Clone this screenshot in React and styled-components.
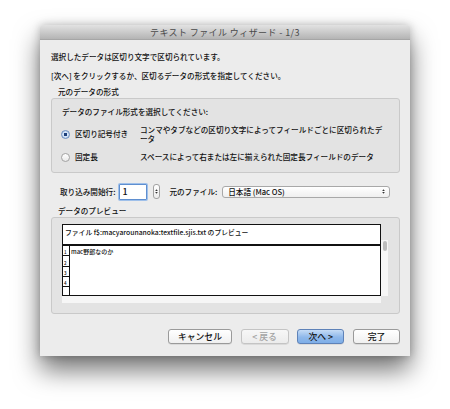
import React from 'react';
import styled, {createGlobalStyle} from 'styled-components';

const GlobalStyle = createGlobalStyle`
  html, body {
    margin: 0;
    padding: 0;
    background: #fff;
  }
  body {
    font-family: "Noto Sans CJK JP", "Noto Sans", sans-serif;
    font-weight: 500;
    color: #111;
  }
`;

const Page = styled.div`
  width: 450px;
  height: 409px;
  padding: 25px 0 0 40px;
  box-sizing: border-box;
  overflow: hidden;
`;

const Window = styled.div`
  width: 370px;
  background: #ececec;
  box-shadow: 0 14px 26px rgba(0, 0, 0, 0.55), 0 0 9px rgba(0, 0, 0, 0.22);
  border-radius: 3px 3px 0 0;
`;

const TitleBar = styled.div`
  height: 15px;
  display: flex;
  align-items: center;
  justify-content: center;
  background: linear-gradient(#e2e2e2, #b4b4b4);
  border-bottom: 1px solid #a6a6a6;
  border-radius: 3px 3px 0 0;
  box-sizing: border-box;
  font-size: 9px;
  font-weight: 400;
  letter-spacing: 0.4px;
  color: #4a4a4a;
`;

const Content = styled.div`
  padding: 12px 10px 12px 11px;
  display: flex;
  flex-direction: column;
`;

const Line = styled.div`
  font-size: 7.6px;
  line-height: 10px;
  height: 10px;
  white-space: nowrap;
  margin-top: ${p => p.top || 0}px;
  padding-left: ${p => p.indent || 0}px;
`;

const Group = styled.div`
  margin-top: 1px;
  background: #e3e3e3;
  border: 1px solid #c9c9c9;
  border-radius: 3px;
  padding: ${p => p.pad};
`;

const RadioRow = styled.div`
  display: grid;
  grid-template-columns: 78px 1fr;
  align-items: center;
  margin-top: ${p => p.top}px;
  font-size: 7.6px;
  line-height: 8.7px;
`;

const RadioLabel = styled.div`
  display: flex;
  align-items: center;
  gap: 5px;
  margin-left: -1px;
`;

const RadioCircle = styled.span`
  width: 9px;
  height: 9px;
  border-radius: 50%;
  box-sizing: border-box;
  border: 1px solid ${p => p.checked ? '#6d8fbf' : '#a3a3a3'};
  background: ${p => p.checked
    ? 'radial-gradient(circle, #1c3f7a 0 1.6px, #d7e6f8 2px, #a9c6ea 100%)'
    : 'linear-gradient(#ffffff, #e9e9e9)'};
`;

const Desc = styled.div`
  white-space: nowrap;
`;

const ControlRow = styled.div`
  margin-top: 11px;
  height: 16px;
  display: flex;
  align-items: center;
  padding-left: 9px;
  font-size: 7.6px;
  white-space: nowrap;
`;

const NumberInput = styled.div`
  margin-left: 4px;
  width: 28px;
  height: 15.5px;
  box-sizing: border-box;
  background: #fff;
  border: 1px solid #5f8fd0;
  box-shadow: 0 0 0 1px #9fc0ea;
  border-radius: 1px;
  font-size: 9px;
  line-height: 13px;
  padding-left: 2px;
`;

const Stepper = styled.div`
  margin-left: 6px;
  width: 7px;
  height: 15px;
  box-sizing: border-box;
  border: 1px solid #a2a2a2;
  border-radius: 3px;
  background: linear-gradient(#ffffff, #ececec);
  display: flex;
  align-items: center;
  justify-content: center;
`;

const Label = styled.span`
  margin-left: ${p => p.left || 0}px;
`;

const Select = styled.div`
  margin-left: 5px;
  width: 168px;
  height: 12.5px;
  box-sizing: border-box;
  border: 1px solid #a8a8a8;
  border-radius: 3px;
  background: linear-gradient(#ffffff, #efefef);
  display: flex;
  align-items: center;
  justify-content: space-between;
  padding: 0 4px 0 5px;
  font-size: 7.6px;
`;

const Preview = styled.div`
  display: grid;
  grid-template-columns: 319px 7px;
  grid-template-rows: 20.7px 51.3px 7px;
`;

const PreviewHeader = styled.div`
  background: #fff;
  border: 1px solid #111;
  box-sizing: border-box;
  font-size: 6.8px;
  line-height: 10px;
  padding: 2px 2px 0;
  white-space: nowrap;
`;

const Lines = styled.div`
  grid-column: 1;
  grid-row: 2;
  background: #fff;
  border: 1px solid #111;
  box-sizing: border-box;
  display: grid;
  grid-template-columns: 7px 1fr;
  overflow: hidden;
`;

const Gutter = styled.div`
  display: flex;
  flex-direction: column;
`;

const RowNum = styled.div`
  height: 10.3px;
  flex: none;
  box-sizing: border-box;
  border-right: 1px solid #111;
  border-bottom: 1px solid #111;
  font-size: 4.5px;
  line-height: 5px;
  display: flex;
  align-items: flex-end;
  padding-left: 1px;
`;

const LineText = styled.div`
  font-size: 6px;
  line-height: 8px;
  padding: 2px 0 0 1px;
  white-space: nowrap;
`;

const VTrack = styled.div`
  grid-column: 2;
  grid-row: 1 / 3;
  align-self: end;
  height: 56px;
  background: #f6f6f6;
  display: flex;
  justify-content: center;
`;

const Thumb = styled.div`
  margin-top: 1px;
  width: 4px;
  height: 10px;
  border-radius: 2px;
  background: #bdbdbd;
`;

const HTrack = styled.div`
  grid-column: 1;
  grid-row: 3;
  background: #f6f6f6;
`;

const Buttons = styled.div`
  margin-top: 15px;
  display: flex;
  justify-content: flex-end;
  gap: 8.7px;
`;

const Button = styled.div`
  width: ${p => p.w}px;
  height: 14.3px;
  box-sizing: border-box;
  border-radius: 3px;
  display: flex;
  align-items: center;
  justify-content: center;
  font-size: 8.8px;
  border: 1px solid ${p => p.primary ? '#5e82b8' : p.disabled ? '#c4c4c4' : '#9a9a9a'};
  color: ${p => p.disabled ? '#a3a3a3' : '#111'};
  background: ${p => p.primary
    ? 'linear-gradient(#c6dcf6, #8fb8ea 55%, #7eaee8)'
    : p.disabled ? 'linear-gradient(#f7f7f7, #ececec)' : 'linear-gradient(#ffffff, #f0f0f0)'};
  box-shadow: 0 0.5px 0.5px rgba(0, 0, 0, 0.15);
`;

const UpDown = ({size = 5}) => (
  <svg width="3" height={size} viewBox="0 0 3 5">
    <path d="M1.5 0.3 L2.8 2 L0.2 2 Z" fill="#333" />
    <path d="M1.5 4.7 L2.8 3 L0.2 3 Z" fill="#333" />
  </svg>
);

export default function App() {
  return (
    <>
      <GlobalStyle />
      <Page>
        <Window>
          <TitleBar>テキスト ファイル ウィザード - 1/3</TitleBar>
          <Content>
            <Line>選択したデータは区切り文字で区切られています。</Line>
            <Line top={9}>[次へ] をクリックするか、区切るデータの形式を指定してください。</Line>
            <Line top={6} indent={7}>元のデータの形式</Line>
            <Group pad="8px 10px 10px 10px">
              <Line>データのファイル形式を選択してください:</Line>
              <RadioRow top={9}>
                <RadioLabel><RadioCircle checked />区切り記号付き</RadioLabel>
                <Desc>コンマやタブなどの区切り文字によってフィールドごとに区切られたデ<br />ータ</Desc>
              </RadioRow>
              <RadioRow top={9.5}>
                <RadioLabel><RadioCircle />固定長</RadioLabel>
                <Desc>スペースによって右または左に揃えられた固定長フィールドのデータ</Desc>
              </RadioRow>
            </Group>
            <ControlRow>
              <Label>取り込み開始行:</Label>
              <NumberInput>1</NumberInput>
              <Stepper><UpDown /></Stepper>
              <Label left={9}>元のファイル:</Label>
              <Select>
                <span>日本語 (Mac OS)</span>
                <UpDown />
              </Select>
            </ControlRow>
            <Line top={6} indent={7}>データのプレビュー</Line>
            <Group pad="6.5px 11px 10px 10px">
              <Preview>
                <PreviewHeader>ファイル f$:macyarounanoka:textfile.sjis.txt のプレビュー</PreviewHeader>
                <VTrack><Thumb /></VTrack>
                <Lines>
                  <Gutter>
                    {[1, 2, 3, 4, ''].map((n, i) => <RowNum key={i}>{n}</RowNum>)}
                  </Gutter>
                  <LineText>mac野郎なのか</LineText>
                </Lines>
                <HTrack />
              </Preview>
            </Group>
            <Buttons>
              <Button w={64}>キャンセル</Button>
              <Button w={48} disabled>&lt; 戻る</Button>
              <Button w={47} primary>次へ &gt;</Button>
              <Button w={47}>完了</Button>
            </Buttons>
          </Content>
        </Window>
      </Page>
    </>
  );
}
